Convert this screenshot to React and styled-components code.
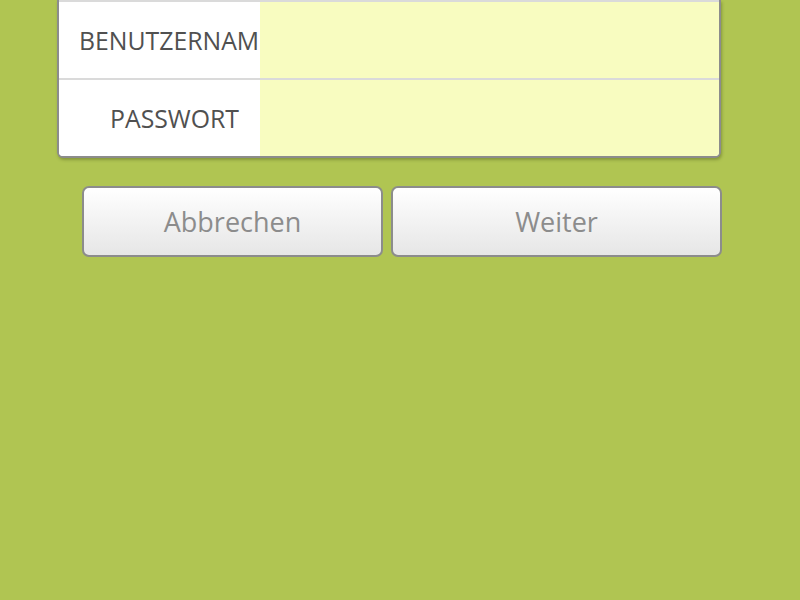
import React from "react";
import styled, { createGlobalStyle } from "styled-components";

const Global = createGlobalStyle`
  html, body { margin: 0; padding: 0; background: #b0c552; }
  body { font-family: "Open Sans", "DejaVu Sans", sans-serif; }
  #root { width: 800px; height: 600px; overflow: hidden; }
`;

const Page = styled.div`
  width: 800px;
  height: 600px;
  background: #b0c552;
  display: flex;
  flex-direction: column;
  padding-left: 57px;
  box-sizing: border-box;
`;

const Card = styled.div`
  width: 664px;
  box-sizing: border-box;
  border: 2px solid #8c8c8c;
  border-top: none;
  border-radius: 0 0 6px 6px;
  overflow: hidden;
  background: #ffffff;
  box-shadow: 1px 2px 3px rgba(60, 70, 20, 0.35);
  display: flex;
  flex-direction: column;
`;

const Row = styled.div`
  display: flex;
  height: 78px;
  border-top: 2px solid #dadada;
  box-sizing: border-box;
`;

const Label = styled.div`
  width: 201px;
  flex: none;
  box-sizing: border-box;
  padding: 0 21px 0 20px;
  display: flex;
  align-items: center;
  justify-content: ${(p) => (p.$start ? "flex-start" : "flex-end")};
  overflow: hidden;
  white-space: nowrap;
  font-size: 24.8px;
  color: #505050;
  background: #ffffff;
`;

const LabelText = styled.span`
  flex: none;
`;

const Field = styled.div`
  flex: 1;
  background: #f8fcc0;
`;

const Buttons = styled.div`
  display: flex;
  gap: 8px;
  margin-top: 28px;
  margin-left: 25px;
`;

const Button = styled.button`
  width: ${(p) => p.$w}px;
  height: 71px;
  box-sizing: border-box;
  border: 2px solid #8c8c8c;
  border-radius: 7px;
  background: linear-gradient(#ffffff, #e6e6e6);
  font-family: "Open Sans", "DejaVu Sans", sans-serif;
  font-size: 27px;
  color: #8c8c8c;
  padding: 0;
  display: flex;
  align-items: center;
  justify-content: center;
`;

export default function App() {
  return (
    <>
      <Global />
      <Page>
        <Card>
          <Row>
            <Label $start>
              <LabelText>BENUTZERNAM</LabelText>
            </Label>
            <Field />
          </Row>
          <Row>
            <Label>
              <LabelText>PASSWORT</LabelText>
            </Label>
            <Field />
          </Row>
        </Card>
        <Buttons>
          <Button $w={301}>Abbrechen</Button>
          <Button $w={331}>Weiter</Button>
        </Buttons>
      </Page>
    </>
  );
}
